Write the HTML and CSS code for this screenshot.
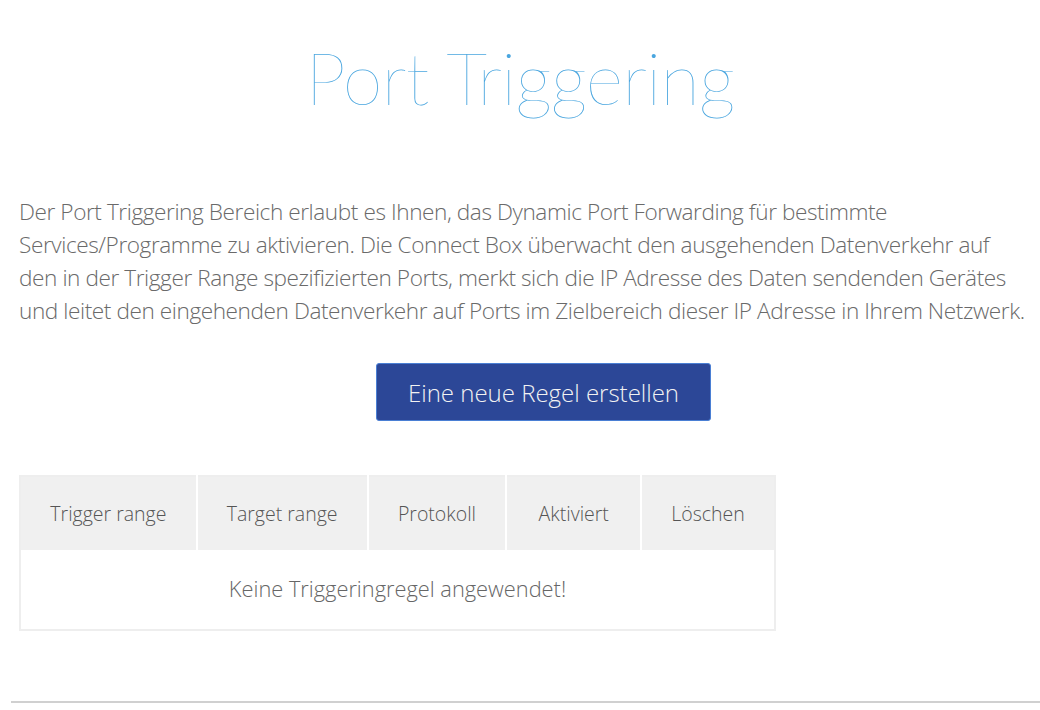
FILE: index.html
```html
<!DOCTYPE html>
<html lang="de">
<head>
<meta charset="utf-8">
<title>Port Triggering</title>
<link rel="stylesheet" href="styles.css">
</head>
<body>
<main class="page">
  <h1 class="title">Port Triggering</h1>
  <p class="intro">Der Port Triggering Bereich erlaubt es Ihnen, das Dynamic Port Forwarding für bestimmte Services/Programme zu aktivieren. Die Connect Box überwacht den ausgehenden Datenverkehr auf den in der Trigger Range spezifizierten Ports, merkt sich die IP Adresse des Daten sendenden Gerätes und leitet den eingehenden Datenverkehr auf Ports im Zielbereich dieser IP Adresse in Ihrem Netzwerk.</p>
  <div class="actions">
    <button class="btn-primary" type="button">Eine neue Regel erstellen</button>
  </div>
  <table class="rules">
    <thead>
      <tr>
        <th class="c1">Trigger range</th>
        <th class="c2">Target range</th>
        <th class="c3">Protokoll</th>
        <th class="c4">Aktiviert</th>
        <th class="c5">Löschen</th>
      </tr>
    </thead>
    <tbody>
      <tr>
        <td colspan="5" class="empty">Keine Triggeringregel angewendet!</td>
      </tr>
    </tbody>
  </table>
</main>
<hr class="divider">
</body>
</html>
```

FILE: styles.css
```css
html, body {
  margin: 0;
  padding: 0;
  background: #fff;
}
body {
  font-family: "Open Sans", "Liberation Sans", sans-serif;
  font-weight: 300;
  color: #666;
}
.page {
  padding: 0 0 0 19px;
}
.title {
  margin: 0 0 0 -19px;
  padding-top: 27px;
  height: 140px;
  box-sizing: border-box;
  text-align: center;
  font-family: "Lato", "Open Sans", sans-serif;
  font-weight: 200;
  font-size: 72px;
  line-height: 100px;
  color: #4aa6df;
  letter-spacing: -0.7px;
}
.intro {
  margin: 55px 10px 0 0;
  font-size: 22.6px;
  letter-spacing: -0.42px;
  line-height: 33px;
  color: #6a6a6a;
}
.actions {
  display: flex;
  margin-top: 36px;
}
.btn-primary {
  margin-left: 357px;
  width: 335px;
  height: 58px;
  background: #2c4797;
  border: 1px solid #4a7fd4;
  border-radius: 3px;
  color: #f2f2f2;
  font-family: inherit;
  font-weight: 300;
  font-size: 24px;
}
.rules {
  margin-top: 54px;
  border-collapse: collapse;
  width: 757px;
  border: 2px solid #eeeeee;
}
.rules th {
  background: #f0f0f0;
  height: 73px;
  font-weight: 300;
  font-size: 19.5px;
  color: #555;
  border-left: 2px solid #fff;
  padding: 0;
}
.rules th:first-child { border-left: none; }
.c1 { width: 177px; }
.c2 { width: 171px; }
.c3 { width: 138px; }
.c4 { width: 134px; }
.c5 { width: 133px; }
.empty {
  height: 77px;
  text-align: center;
  font-size: 21.8px;
  color: #666;
  padding: 0 0 2px;
}
.divider {
  margin: 70px 0 0 11px;
  border: none;
  border-top: 2px solid #d0d0d0;
  height: 0;
}
```
